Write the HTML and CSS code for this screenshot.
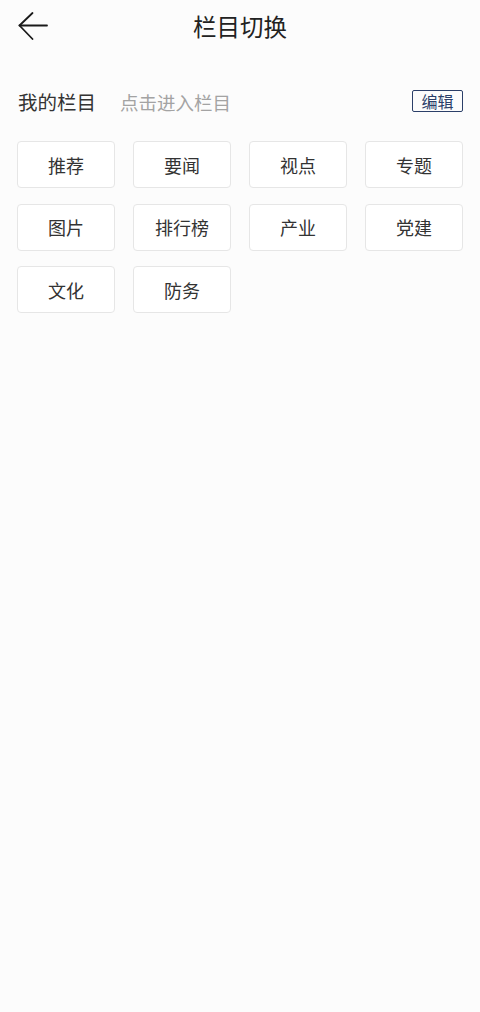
FILE: index.html
```html
<!DOCTYPE html>
<html lang="zh-CN">
<head>
<meta charset="utf-8">
<title>栏目切换</title>
<link rel="stylesheet" href="styles.css">
</head>
<body>
<header class="topbar">
  <div class="back">
    <svg width="30" height="29" viewBox="0 0 30 29" fill="none" stroke="#1a1a1a" stroke-width="1.8" stroke-linecap="round" stroke-linejoin="round">
      <path d="M29 13.5H1.5"/>
      <path d="M14.5 1L1.5 13.5L14.5 27"/>
    </svg>
  </div>
  <h1 class="title">栏目切换</h1>
  <div></div>
</header>
<section class="mine">
  <div class="mine-head">
    <span class="mine-title">我的栏目</span>
    <span class="mine-hint">点击进入栏目</span>
    <span class="edit">编辑</span>
  </div>
  <div class="tiles">
    <div class="tile">推荐</div>
    <div class="tile">要闻</div>
    <div class="tile">视点</div>
    <div class="tile">专题</div>
    <div class="tile">图片</div>
    <div class="tile">排行榜</div>
    <div class="tile">产业</div>
    <div class="tile">党建</div>
    <div class="tile">文化</div>
    <div class="tile">防务</div>
  </div>
</section>
</body>
</html>
```
FILE: styles.css
```css
html, body {
  margin: 0;
  padding: 0;
  background: #fcfcfc;
  font-family: "Noto Sans CJK SC", "Noto Sans", sans-serif;
  color: #333;
}

.topbar {
  height: 54px;
  display: grid;
  grid-template-columns: 1fr auto 1fr;
  align-items: center;
}

.back {
  padding-left: 18px;
  display: flex;
  align-items: center;
  height: 29px;
  margin-top: -2px;
}

.title {
  margin: 0;
  font-size: 23.5px;
  font-weight: 400;
  color: #222;
  line-height: 1;
}

.mine-head {
  margin-top: 36px;
  height: 24px;
  padding: 0 17px 0 18px;
  display: flex;
  align-items: center;
}

.mine-title {
  font-size: 19.5px;
  color: #333;
  line-height: 1;
}

.mine-hint {
  margin-left: 24px;
  font-size: 18.5px;
  color: #a3a3a3;
  line-height: 1;
  flex: 1;
}

.edit {
  width: 49px;
  height: 20px;
  margin-top: -3px;
  border: 1.5px solid #2b3f69;
  border-radius: 2px;
  color: #2b3f69;
  font-size: 16px;
  line-height: 20px;
  text-align: center;
}

.tiles {
  margin-top: 27px;
  padding: 0 17px;
  display: grid;
  grid-template-columns: repeat(4, 98px);
  column-gap: 18px;
  row-gap: 15.5px;
}

.tile {
  height: 45px;
  box-sizing: content-box;
  padding-bottom: 0;
  border: 1px solid #e6e6e6;
  border-radius: 4px;
  background: #fff;
  display: flex;
  align-items: center;
  justify-content: center;
  font-size: 18px;
  line-height: 1;
  color: #333;
}
```
